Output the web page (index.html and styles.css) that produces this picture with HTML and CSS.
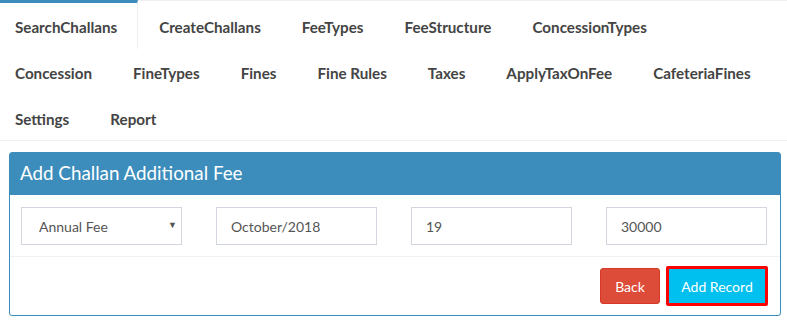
FILE: index.html
```html
<!DOCTYPE html>
<html lang="en">

<head>
    <meta charset="utf-8">
    <meta name="viewport" content="width=device-width, initial-scale=1.0">
    <title>Challans</title>
    <link rel="stylesheet" href="styles.css">
</head>

<body>

    <nav class="tabs">
        <a class="tab active">SearchChallans</a>
        <a class="tab">CreateChallans</a>
        <a class="tab">FeeTypes</a>
        <a class="tab">FeeStructure</a>
        <a class="tab">ConcessionTypes</a>
        <a class="tab">Concession</a>
        <a class="tab">FineTypes</a>
        <a class="tab">Fines</a>
        <a class="tab">Fine Rules</a>
        <a class="tab">Taxes</a>
        <a class="tab">ApplyTaxOnFee</a>
        <a class="tab">CafeteriaFines</a>
        <a class="tab">Settings</a>
        <a class="tab">Report</a>
    </nav>

    <div class="box">
        <div class="box-header">
            <h3>Add Challan Additional Fee</h3>
        </div>

        <div class="box-body">
            <div class="select-wrap">
                <select class="field">
                    <option>Annual Fee</option>
                </select>
                <span class="caret">&#9660;</span>
            </div>
            <input class="field" type="text" value="October/2018">
            <input class="field" type="text" value="19">
            <input class="field" type="text" value="30000">
        </div>

        <div class="box-footer">
            <button class="btn btn-back">Back</button>
            <button class="btn btn-add">Add Record</button>
        </div>
    </div>

</body></html>
```

FILE: styles.css
```css
* {
    margin: 0;
    padding: 0;
    box-sizing: border-box;
}

body {
    background-color: #fff;
    font-family: 'Lato', 'Open Sans', sans-serif;
    color: #444;
}

.tabs {
    display: flex;
    flex-wrap: wrap;
    border-top: 1px solid #eef0f4;
    border-bottom: 1px solid #eef0f4;
    height: 141px;
    align-content: flex-start;
}

.tab {
    display: block;
    height: 46px;
    line-height: 53px;
    padding: 0 20px 0 15px;
    margin-right: 6px;
    font-size: 15.2px;
    font-weight: bold;
    color: #444;
    cursor: pointer;
}

.tab.active {
    margin-top: -1px;
    height: 49px;
    line-height: 49px;
    border-top: 3px solid #3c8dbc;
    border-right: 1px solid #eef0f4;
    margin-bottom: -2px;
}

.box {
    margin: 11px 6px 0 9px;
    border: 1px solid #3c8dbc;
    border-radius: 3px;
    box-shadow: 0 1px 1px rgba(0, 0, 0, 0.1);
    height: 164px;
}

.box-header {
    background-color: #3c8dbc;
    height: 42px;
    padding: 0 10px;
}

.box-header h3 {
    font-weight: normal;
    font-size: 18.8px;
    line-height: 40px;
    color: #fff;
}

.box-body {
    display: grid;
    grid-template-columns: repeat(4, 161px);
    column-gap: 34px;
    padding: 12px 11px 11px;
    border-bottom: 1px solid #f1f1f1;
}

.select-wrap {
    position: relative;
}

.field {
    display: block;
    width: 161px;
    height: 38px;
    border: 1px solid #d2d6de;
    padding: 0 14px;
    font-family: inherit;
    font-size: 14px;
    color: #555;
    background-color: #fff;
    appearance: none;
    border-radius: 0;
}

select.field {
    padding-left: 17px;
}

.caret {
    position: absolute;
    right: 5px;
    top: 12px;
    font-size: 9px;
    color: #555;
}

.box-footer {
    display: flex;
    justify-content: flex-end;
    gap: 6px;
    padding: 9px 12px 0;
}

.btn {
    font-family: inherit;
    font-size: 14px;
    color: #fff;
    border: 1px solid transparent;
    border-radius: 3px;
    height: 36px;
    cursor: pointer;
}

.btn-back {
    background-color: #dd4b39;
    border-color: #d73925;
    width: 60px;
    margin-top: 2px;
}

.btn-add {
    background-color: #00c0ef;
    border: 3px solid #ff0000;
    border-radius: 2px;
    width: 102px;
    height: 40px;
}
```
